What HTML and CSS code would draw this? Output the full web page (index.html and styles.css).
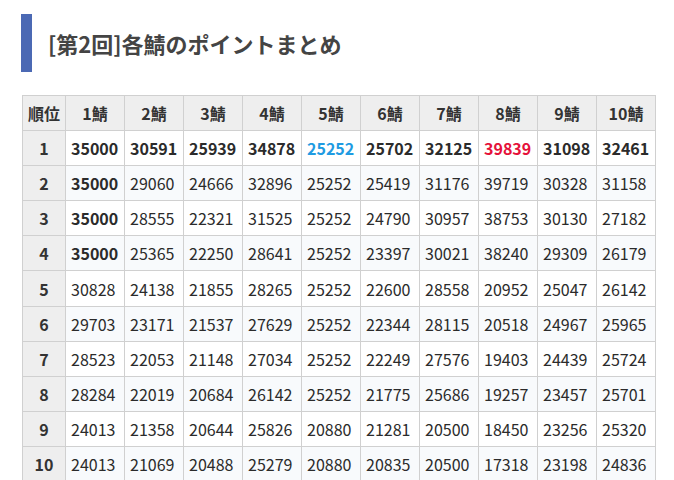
FILE: index.html
```html
<!DOCTYPE html>
<html lang="ja">
<head>
<meta charset="utf-8">
<link rel="stylesheet" href="styles.css">
</head>
<body>
<h2 class="title">[第2回]各鯖のポイントまとめ</h2>
<table class="points">
<colgroup><col class="c-rank"><col span="10" class="c-srv"></colgroup>
<thead>
<tr><th>順位</th><th>1鯖</th><th>2鯖</th><th>3鯖</th><th>4鯖</th><th>5鯖</th><th>6鯖</th><th>7鯖</th><th>8鯖</th><th>9鯖</th><th>10鯖</th></tr>
</thead>
<tbody>
<tr class="top"><th>1</th><td>35000</td><td>30591</td><td>25939</td><td>34878</td><td class="blue">25252</td><td>25702</td><td>32125</td><td class="red">39839</td><td>31098</td><td>32461</td></tr>
<tr><th>2</th><td class="b">35000</td><td>29060</td><td>24666</td><td>32896</td><td>25252</td><td>25419</td><td>31176</td><td>39719</td><td>30328</td><td>31158</td></tr>
<tr><th>3</th><td class="b">35000</td><td>28555</td><td>22321</td><td>31525</td><td>25252</td><td>24790</td><td>30957</td><td>38753</td><td>30130</td><td>27182</td></tr>
<tr><th>4</th><td class="b">35000</td><td>25365</td><td>22250</td><td>28641</td><td>25252</td><td>23397</td><td>30021</td><td>38240</td><td>29309</td><td>26179</td></tr>
<tr><th>5</th><td>30828</td><td>24138</td><td>21855</td><td>28265</td><td>25252</td><td>22600</td><td>28558</td><td>20952</td><td>25047</td><td>26142</td></tr>
<tr><th>6</th><td>29703</td><td>23171</td><td>21537</td><td>27629</td><td>25252</td><td>22344</td><td>28115</td><td>20518</td><td>24967</td><td>25965</td></tr>
<tr><th>7</th><td>28523</td><td>22053</td><td>21148</td><td>27034</td><td>25252</td><td>22249</td><td>27576</td><td>19403</td><td>24439</td><td>25724</td></tr>
<tr><th>8</th><td>28284</td><td>22019</td><td>20684</td><td>26142</td><td>25252</td><td>21775</td><td>25686</td><td>19257</td><td>23457</td><td>25701</td></tr>
<tr><th>9</th><td>24013</td><td>21358</td><td>20644</td><td>25826</td><td>20880</td><td>21281</td><td>20500</td><td>18450</td><td>23256</td><td>25320</td></tr>
<tr><th>10</th><td>24013</td><td>21069</td><td>20488</td><td>25279</td><td>20880</td><td>20835</td><td>20500</td><td>17318</td><td>23198</td><td>24836</td></tr>
</tbody>
</table>
</body>
</html>
```
FILE: styles.css
```css
html, body {
  margin: 0;
  padding: 0;
  background: #fff;
}
body {
  font-family: "Noto Sans CJK JP", "Noto Sans", sans-serif;
  color: #333;
  padding: 14px 0 0 21px;
}
.title {
  margin: 0;
  height: 58px;
  box-sizing: border-box;
  border-left: 11px solid #4b69b4;
  padding-left: 16px;
  display: flex;
  align-items: center;
  font-size: 22px;
  font-weight: bold;
  color: #444;
  letter-spacing: 0;
}
.points {
  margin-top: 23px;
  margin-left: 1px;
  border-collapse: collapse;
  table-layout: fixed;
  width: 634px;
  font-size: 16px;
}
.c-rank { width: 43px; }
.c-srv { width: 59px; }
.points tr {
  height: 35.1px;
}
.points th, .points td {
  border: 1px solid #d0d0d0;
  padding: 0 5px;
  line-height: 1;
  white-space: nowrap;
}
.points th {
  background: #eeeeee;
  font-weight: bold;
  text-align: center;
  color: #333;
}
.points td {
  text-align: left;
  background: #fff;
  color: #2b2b2b;
}
.points tbody tr:nth-child(even) td {
  background: #f8fafc;
}
.points .top td, .points td.b {
  font-weight: bold;
}
.points td.blue { color: #1f9be2; }
.points td.red { color: #e5123a; }
```
